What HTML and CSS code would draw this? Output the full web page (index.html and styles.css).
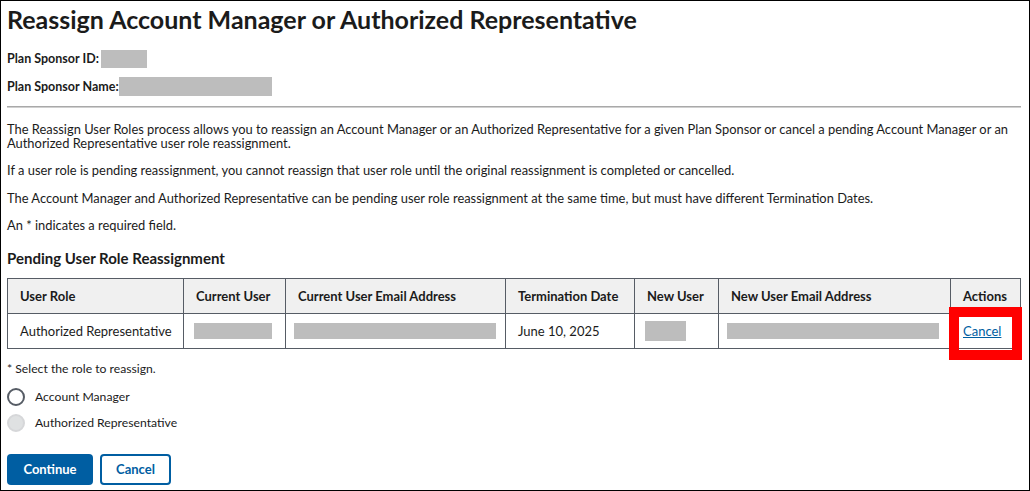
FILE: index.html
```html
<!DOCTYPE html>
<html>
<head>
    <meta charset="UTF-8">
    <title>Reassign Account Manager or Authorized Representative</title>
    <link rel="stylesheet" href="styles.css">
</head>
<body>
<div class="page">
    <h1>Reassign Account Manager or Authorized Representative</h1>

    <div class="sponsor_row">
        <b>Plan Sponsor ID:</b>
        <span class="redact sponsor_id"></span>
    </div>
    <div class="sponsor_row">
        <b>Plan Sponsor Name:</b>
        <span class="redact sponsor_name"></span>
    </div>

    <hr>

    <div class="intro">
        <p>The Reassign User Roles process allows you to reassign an Account Manager or an Authorized Representative for a given Plan Sponsor or cancel a pending Account Manager or an Authorized Representative user role reassignment.</p>
        <p>If a user role is pending reassignment, you cannot reassign that user role until the original reassignment is completed or cancelled.</p>
        <p>The Account Manager and Authorized Representative can be pending user role reassignment at the same time, but must have different Termination Dates.</p>
        <p>An * indicates a required field.</p>
    </div>

    <h2>Pending User Role Reassignment</h2>

    <table class="pending_table">
        <colgroup>
            <col class="c_role">
            <col class="c_user">
            <col class="c_email">
            <col class="c_date">
            <col class="c_new">
            <col class="c_newemail">
            <col class="c_actions">
        </colgroup>
        <thead>
            <tr>
                <th>User Role</th>
                <th>Current User</th>
                <th>Current User Email Address</th>
                <th>Termination Date</th>
                <th>New User</th>
                <th>New User Email Address</th>
                <th>Actions</th>
            </tr>
        </thead>
        <tbody>
            <tr>
                <td>Authorized Representative</td>
                <td><span class="redact cur_user"></span></td>
                <td><span class="redact cur_email"></span></td>
                <td>June 10, 2025</td>
                <td><span class="redact new_user"></span></td>
                <td><span class="redact new_email"></span></td>
                <td class="action_cell">
                    <a href="#">Cancel</a>
                    <span class="highlight"></span>
                </td>
            </tr>
        </tbody>
    </table>

    <fieldset class="role_select">
        <legend>* Select the role to reassign.</legend>
        <label class="radio">
            <input type="radio" name="role">
            <span class="radio_mark"></span>
            Account Manager
        </label>
        <label class="radio disabled">
            <input type="radio" name="role" disabled>
            <span class="radio_mark"></span>
            Authorized Representative
        </label>
    </fieldset>

    <div class="buttons">
        <button class="btn btn_primary">Continue</button>
        <button class="btn btn_outline">Cancel</button>
    </div>
</div>
</body>
</html>
```

FILE: styles.css
```css
:root {
    --clr-text: #1b1b1b;
    --clr-blue: #005ea2;
    --clr-border: #565c65;
    --clr-head-bg: #f0f0f0;
    --clr-redact: #bdbdbd;
}

*, *::before, *::after {
    box-sizing: border-box;
}

body {
    margin: 0;
    font-family: Lato, "Liberation Sans", sans-serif;
    color: var(--clr-text);
    background-color: white;
    font-size: 13px;
}

.page {
    height: 491px;
    border: 1px solid #000;
    padding: 0 5px 0 6px;
    overflow: hidden;
}

h1 {
    margin: 2px 0 0;
    font-size: 25px;
    line-height: 32px;
    font-weight: 700;
}

.sponsor_row {
    display: flex;
    align-items: center;
    height: 19px;
    margin-top: 14px;
    font-size: 12.5px;
}

.sponsor_row + .sponsor_row {
    margin-top: 9px;
}

.redact {
    display: inline-block;
    background-color: var(--clr-redact);
}

.sponsor_id {
    width: 46px;
    height: 18px;
    margin-left: 2px;
}

.sponsor_name {
    width: 153px;
    height: 19px;
}

hr {
    margin: 10px 3px 0 0;
    border: 0;
    border-top: 1px solid #a9a9a9;
    border-bottom: 1px solid #d0d0d0;
}

.intro {
    margin-top: 15px;
    font-size: 12.9px;
}

.intro p {
    margin: 0 0 14px;
    line-height: 13.5px;
}

h2 {
    margin: 16px 0 0;
    font-size: 15px;
    line-height: 18px;
}

.pending_table {
    margin-top: 11px;
    width: 1014px;
    border-collapse: collapse;
    table-layout: fixed;
}

.c_role { width: 176px; }
.c_user { width: 102px; }
.c_email { width: 220px; }
.c_date { width: 129px; }
.c_new { width: 84px; }
.c_newemail { width: 232px; }
.c_actions { width: 70px; }

.pending_table th,
.pending_table td {
    border: 1px solid var(--clr-border);
    padding: 0 12px;
    height: 35px;
    text-align: left;
    white-space: nowrap;
}

.pending_table th {
    background-color: var(--clr-head-bg);
    font-weight: 700;
}

.cur_user { width: 78px; height: 16px; margin-left: -2px; vertical-align: middle; }
.cur_email { width: 202px; height: 16px; margin-left: -4px; vertical-align: middle; }
.new_user { width: 41px; height: 20px; margin-left: -2px; vertical-align: middle; }
.new_email { width: 212px; height: 16px; margin-left: -4px; vertical-align: middle; }

.action_cell {
    position: relative;
}

.action_cell a {
    color: var(--clr-blue);
}

/* annotation box round the cancel link */
.highlight {
    position: absolute;
    left: -2px;
    top: -7px;
    width: 73px;
    height: 53px;
    border: 10px solid #ff0000;
    pointer-events: none;
}

.role_select {
    margin: 13px 0 0;
    padding: 0;
    border: 0;
    font-size: 12.2px;
}

.role_select legend {
    padding: 0;
    line-height: 14px;
}

.radio {
    display: flex;
    align-items: center;
    gap: 10px;
    height: 18px;
    margin-top: 12px;
}

.radio + .radio {
    margin-top: 8px;
}

.radio input {
    position: absolute;
    opacity: 0;
}

.radio_mark {
    width: 18px;
    height: 18px;
    border-radius: 50%;
    border: 2px solid var(--clr-border);
    background-color: white;
}

.radio.disabled .radio_mark {
    border-color: #d6d7d9;
    background-color: #dfe1e2;
}

.buttons {
    display: flex;
    gap: 7px;
    margin-top: 22px;
}

.btn {
    font-family: inherit;
    font-size: 13px;
    font-weight: 700;
    border-radius: 4px;
    height: 31px;
    cursor: pointer;
}

.btn_primary {
    width: 86px;
    background-color: var(--clr-blue);
    color: white;
    border: 0;
}

.btn_outline {
    width: 71px;
    background-color: white;
    color: var(--clr-blue);
    border: 2px solid var(--clr-blue);
}
```
